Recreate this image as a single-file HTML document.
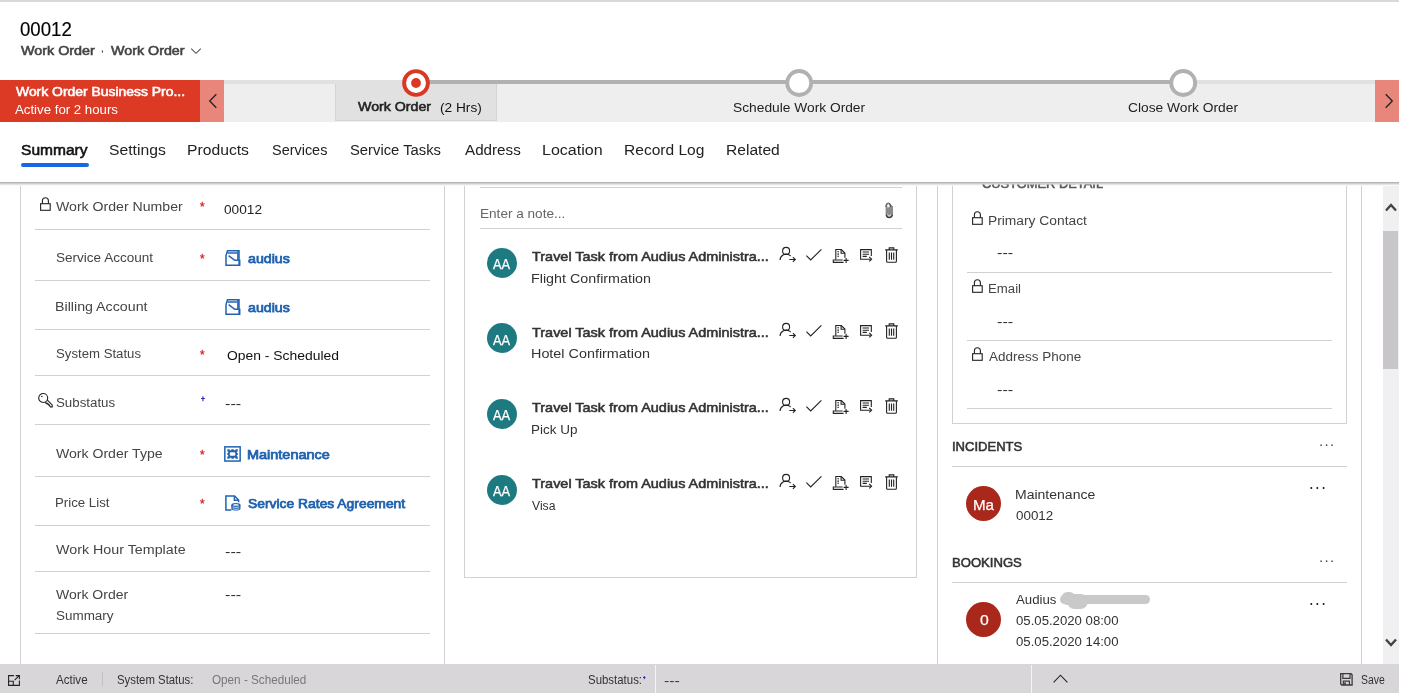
<!DOCTYPE html>
<html lang="en">
<head>
<meta charset="utf-8">
<title>Work Order 00012</title>
<style>
*{box-sizing:border-box;margin:0;padding:0}
html,body{width:1401px;height:693px;overflow:hidden;background:#fff}
body{font-family:"Liberation Sans",sans-serif;color:#333;position:relative;font-size:14px}
.b{position:absolute}
.t{position:absolute;white-space:nowrap;line-height:20px;height:20px;transform-origin:0 50%}
.hl{position:absolute;height:1px;background:#d2d0d3}
.vl{position:absolute;width:1px;background:#d2d0d3}
.req{position:absolute;color:#e0201c;font-size:15px;line-height:16px;height:16px;font-weight:bold}
.av{position:absolute;border-radius:50%}
svg{position:absolute;overflow:visible}
.ic{fill:none;stroke:#222;stroke-width:1.1}
.bl{fill:none;stroke:#2163b1;stroke-width:1.5}
</style>
</head>
<body>
<!-- top strip -->
<div class="b" style="left:0;top:0;width:1399px;height:2px;background:#d9d9d9"></div>

<!-- header chevron -->
<svg style="left:190px;top:47px" width="12" height="8" viewBox="0 0 12 8"><path d="M1.2 1.6 L6 6.3 L10.8 1.6" fill="none" stroke="#555" stroke-width="1.1"/></svg>

<!-- BPF bar -->
<div class="b" style="left:0;top:80px;width:1399px;height:42px;background:#eeeeee"></div>
<div class="b" style="left:224px;top:80px;width:1151px;height:4px;background:#e1e1e1"></div>
<div class="b" style="left:335px;top:84px;width:162px;height:37px;background:#e1e1e1;border:1px solid #d4d4d4;border-top:none"></div>
<div class="b" style="left:416px;top:80px;width:767px;height:4px;background:#b1b1b1"></div>
<div class="b" style="left:0;top:80px;width:200px;height:42px;background:#dc3a25"></div>
<div class="b" style="left:200px;top:80px;width:24px;height:42px;background:#e9867b"></div>
<div class="b" style="left:1375px;top:80px;width:24px;height:42px;background:#e9867b"></div>
<svg style="left:208px;top:93px" width="10" height="16" viewBox="0 0 10 16"><path d="M8.3 1.2 L1.7 8 L8.3 14.8" fill="none" stroke="#222" stroke-width="1.3"/></svg>
<svg style="left:1384px;top:93px" width="10" height="16" viewBox="0 0 10 16"><path d="M1.7 1.2 L8.3 8 L1.7 14.8" fill="none" stroke="#222" stroke-width="1.3"/></svg>
<!-- stage circles -->
<svg style="left:400px;top:67px" width="32" height="32" viewBox="0 0 32 32"><circle cx="16" cy="16" r="11.9" fill="#fff" stroke="#da3824" stroke-width="3.9"/><circle cx="16" cy="16" r="4.9" fill="#da3824"/></svg>
<svg style="left:783px;top:67px" width="32" height="32" viewBox="0 0 32 32"><circle cx="16.2" cy="16" r="12" fill="#fff" stroke="#b1b1b1" stroke-width="3.8"/></svg>
<svg style="left:1167px;top:67px" width="32" height="32" viewBox="0 0 32 32"><circle cx="16.2" cy="16" r="12" fill="#fff" stroke="#b1b1b1" stroke-width="3.8"/></svg>

<!-- tabs underline + shadow -->
<div class="b" style="left:21px;top:163px;width:68px;height:3.5px;border-radius:2px;background:#1a66e8"></div>
<div class="b" style="left:0;top:181px;width:1399px;height:5px;background:linear-gradient(#fff 0%,#fff 13%,#a4a4a4 15%,#c2c2c2 40%,#e4e4e4 70%,#fff 96%)"></div>

<!-- panel borders -->
<div class="vl" style="left:20px;top:186px;height:478px"></div>
<div class="vl" style="left:444px;top:186px;height:478px"></div>
<div class="vl" style="left:464px;top:186px;height:391px"></div>
<div class="vl" style="left:916px;top:186px;height:391px"></div>
<div class="hl" style="left:464px;top:577px;width:453px"></div>
<div class="vl" style="left:937px;top:186px;height:478px"></div>
<div class="vl" style="left:1361px;top:186px;height:478px"></div>
<div class="vl" style="left:952px;top:186px;height:237px"></div>
<div class="vl" style="left:1346px;top:186px;height:237px"></div>
<div class="hl" style="left:952px;top:423px;width:395px"></div>

<!-- left panel separators -->
<div class="hl" style="left:35px;top:229px;width:395px"></div>
<div class="hl" style="left:35px;top:280px;width:395px"></div>
<div class="hl" style="left:35px;top:329px;width:395px"></div>
<div class="hl" style="left:35px;top:375px;width:395px"></div>
<div class="hl" style="left:35px;top:424px;width:395px"></div>
<div class="hl" style="left:35px;top:476px;width:395px"></div>
<div class="hl" style="left:35px;top:525px;width:395px"></div>
<div class="hl" style="left:35px;top:571px;width:395px"></div>
<div class="hl" style="left:35px;top:633px;width:395px"></div>

<!-- middle separators -->
<div class="hl" style="left:480px;top:187px;width:422px"></div>
<div class="hl" style="left:480px;top:228px;width:422px"></div>

<!-- right separators -->
<div class="hl" style="left:967px;top:272px;width:365px"></div>
<div class="hl" style="left:967px;top:340px;width:365px"></div>
<div class="hl" style="left:967px;top:408px;width:365px"></div>
<div class="hl" style="left:952px;top:466px;width:395px"></div>
<div class="hl" style="left:952px;top:582px;width:395px"></div>

<!-- scrollbar -->
<div class="b" style="left:1383px;top:186px;width:16px;height:478px;background:#f0eff1"></div>
<div class="b" style="left:1383px;top:231px;width:15px;height:138px;background:#c8c6c9"></div>
<svg style="left:1385px;top:202px" width="12" height="11" viewBox="0 0 12 11"><path d="M1 8.5 L6 3 L11 8.5" fill="none" stroke="#444" stroke-width="2.4"/></svg>
<svg style="left:1385px;top:637px" width="12" height="11" viewBox="0 0 12 11"><path d="M1 2.5 L6 8 L11 2.5" fill="none" stroke="#444" stroke-width="2.4"/></svg>

<!-- footer -->
<div class="b" style="left:0;top:664px;width:1399px;height:29px;background:#d8d6d9"></div>
<div class="b" style="left:102px;top:672px;width:1px;height:14px;background:#c2c0c3"></div>
<div class="b" style="left:655px;top:665px;width:1px;height:28px;background:#f4f4f4"></div>
<div class="b" style="left:1031px;top:665px;width:1px;height:28px;background:#f4f4f4"></div>

<svg style="left:40.1px;top:196.9px" width="11" height="14" viewBox="0 0 11 14"><rect x="0.6" y="6.7" width="9.6" height="6.6" class="ic" stroke-width="1.25"/><path d="M2.4 6.7 V3.8 A3 3 0 0 1 8.4 3.8 V6.7" class="ic" stroke-width="1.15"/></svg>
<svg style="left:972.1px;top:211.1px" width="11" height="14" viewBox="0 0 11 14"><rect x="0.6" y="6.7" width="9.6" height="6.6" class="ic" stroke-width="1.25"/><path d="M2.4 6.7 V3.8 A3 3 0 0 1 8.4 3.8 V6.7" class="ic" stroke-width="1.15"/></svg>
<svg style="left:972.1px;top:278.6px" width="11" height="14" viewBox="0 0 11 14"><rect x="0.6" y="6.7" width="9.6" height="6.6" class="ic" stroke-width="1.25"/><path d="M2.4 6.7 V3.8 A3 3 0 0 1 8.4 3.8 V6.7" class="ic" stroke-width="1.15"/></svg>
<svg style="left:972.1px;top:346.8px" width="11" height="14" viewBox="0 0 11 14"><rect x="0.6" y="6.7" width="9.6" height="6.6" class="ic" stroke-width="1.25"/><path d="M2.4 6.7 V3.8 A3 3 0 0 1 8.4 3.8 V6.7" class="ic" stroke-width="1.15"/></svg>
<svg style="left:37.8px;top:392.7px" width="15" height="15" viewBox="0 0 15 15"><circle cx="5.2" cy="5" r="4.5" class="ic" stroke-width="1.05"/><circle cx="3.9" cy="3.6" r="0.75" fill="#222"/><path d="M8.9 6.6 L14.2 11.9 V13.9 H11.9" class="ic" stroke-width="1.05"/><path d="M7.0 9.0 L8.6 10.6 L9.1 10.1 L10.2 11.6 L10.7 11.1 L12.2 13.6" class="ic" stroke-width="1.5"/></svg>
<svg style="left:225px;top:249.9px" width="16" height="17" viewBox="0 0 16 17"><path d="M1 15.3 V5.5 L2.5 0.75 H14 V10.3 H14.7 V15.3 Z" class="bl" stroke-width="1.6"/><path d="M2.4 3 H12" class="bl" stroke-width="1.4"/><path d="M12.9 0.7 V10.2" class="bl" stroke-width="3.2"/><path d="M14.1 10 V15.3" class="bl" stroke-width="2.4"/><path d="M3.6 5.6 L9.8 10.3 H13" class="bl" stroke-width="1.6"/></svg>
<svg style="left:225px;top:298.8px" width="16" height="17" viewBox="0 0 16 17"><path d="M1 15.3 V5.5 L2.5 0.75 H14 V10.3 H14.7 V15.3 Z" class="bl" stroke-width="1.6"/><path d="M2.4 3 H12" class="bl" stroke-width="1.4"/><path d="M12.9 0.7 V10.2" class="bl" stroke-width="3.2"/><path d="M14.1 10 V15.3" class="bl" stroke-width="2.4"/><path d="M3.6 5.6 L9.8 10.3 H13" class="bl" stroke-width="1.6"/></svg>
<svg style="left:224.2px;top:446px" width="17" height="16" viewBox="0 0 17 16"><rect x="0.85" y="0.85" width="15.3" height="14.2" class="bl" stroke-width="1.7"/><path fill="#2163b1" fill-rule="evenodd" d="M3.3 3.2 H5.6 V4.2 H7.3 V3.2 H9.8 V4.2 H11.5 V3.2 H13.8 V5.4 H12.9 V6.9 H13.8 V9 H12.9 V10.5 H13.8 V12.7 H11.5 V11.7 H9.8 V12.7 H7.3 V11.7 H5.6 V12.7 H3.3 V10.5 H4.2 V9 H3.3 V6.9 H4.2 V5.4 H3.3 Z M6.6 6.2 L5.8 7 V8.9 L6.6 9.7 H10.5 L11.3 8.9 V7 L10.5 6.2 Z"/></svg>
<svg style="left:225.1px;top:495px" width="16" height="16" viewBox="0 0 16 16"><path d="M6.4 15 H0.9 V0.9 H9.6 L13.6 5 V7.2" class="bl" stroke-width="1.7"/><path d="M9.4 1.2 V5.2 H13.4" class="bl" stroke-width="1.5"/><ellipse cx="10.9" cy="10" rx="4.6" ry="2" fill="#2163b1"/><path d="M6.3 10 V13.6 A4.6 2 0 0 0 15.5 13.6 V10 Z" fill="#2163b1"/><path d="M7.6 11.9 Q10.9 13 14.2 11.9 M7.6 13.8 Q10.9 14.9 14.2 13.8" fill="none" stroke="#e8f0fa" stroke-width="0.8"/><ellipse cx="10.9" cy="9.9" rx="2.9" ry="0.9" fill="#dce8f6"/></svg>
<svg style="left:884.8px;top:201.6px" width="9" height="17" viewBox="0 0 9 17"><path d="M0.6 4.2 A3 3.4 0 0 1 6 3 L8 4.2 V12 A3.7 3.9 0 0 1 0.6 12 Z" fill="#8a8a8a"/><path d="M0.9 5 V3.9 A2.4 2.9 0 0 1 5.7 3.9 V5" fill="none" stroke="#444" stroke-width="0.9"/><path d="M2.2 5.2 V3.8 A1.1 1.5 0 0 1 4.4 3.8 V5.2 Z" fill="#fff"/><path d="M1.3 12.6 A3 3 0 0 0 7.3 12.6" fill="none" stroke="#3a3a3a" stroke-width="1.2"/><path d="M2.7 12.4 A1.6 1.6 0 0 0 5.9 12.4" fill="none" stroke="#f4f4f4" stroke-width="0.9"/></svg>
<svg style="left:779px;top:247.0px" width="120" height="17" viewBox="0 0 120 17"><circle cx="7.1" cy="3.9" r="3.5" class="ic"/><path d="M1 13 A6.3 6.3 0 0 1 10.6 8.1 L11.6 9" class="ic"/><path d="M10.3 12.5 H16.2 M13.9 10.2 L16.3 12.5 L13.9 14.8" class="ic"/><path d="M27.4 8.6 L31.7 12.9 L42.4 2.4" class="ic"/><path d="M56.8 12.8 V2.5 H62.3 L65.9 6 V10.8" class="ic"/><path d="M62.1 2.7 V6.2 H65.7" class="ic" stroke-width="0.9"/><path d="M58.4 4.8 H60 M58.4 7.1 H60 M58.4 9.3 H60" class="ic" stroke-width="0.9"/><path d="M64.6 15.4 H54.3 V13 H63.6" class="ic"/><path d="M64.6 13.4 H69.6 M67.1 10.9 V15.9" class="ic"/><path d="M92.3 9 V2.6 H81.6 V12.2 H91.6" class="ic"/><path d="M83.6 5 H90 M83.6 7.2 H90 M83.6 9.4 H87.8" class="ic" stroke-width="0.9"/><path d="M90.3 10 L92.6 12.2 L90.3 14.4" class="ic"/><path d="M106.2 2.9 H118.8 M110.2 2.7 V0.9 H114.8 V2.7" class="ic" stroke-width="1.15"/><path d="M107.6 3 V14.3 A1 1 0 0 0 108.6 15.3 H116.4 A1 1 0 0 0 117.4 14.3 V3" class="ic" stroke-width="1.15"/><path d="M110.3 5.4 V12.8 M112.5 5.4 V12.8 M114.7 5.4 V12.8" class="ic" stroke-width="1"/></svg>
<svg style="left:779px;top:322.6px" width="120" height="17" viewBox="0 0 120 17"><circle cx="7.1" cy="3.9" r="3.5" class="ic"/><path d="M1 13 A6.3 6.3 0 0 1 10.6 8.1 L11.6 9" class="ic"/><path d="M10.3 12.5 H16.2 M13.9 10.2 L16.3 12.5 L13.9 14.8" class="ic"/><path d="M27.4 8.6 L31.7 12.9 L42.4 2.4" class="ic"/><path d="M56.8 12.8 V2.5 H62.3 L65.9 6 V10.8" class="ic"/><path d="M62.1 2.7 V6.2 H65.7" class="ic" stroke-width="0.9"/><path d="M58.4 4.8 H60 M58.4 7.1 H60 M58.4 9.3 H60" class="ic" stroke-width="0.9"/><path d="M64.6 15.4 H54.3 V13 H63.6" class="ic"/><path d="M64.6 13.4 H69.6 M67.1 10.9 V15.9" class="ic"/><path d="M92.3 9 V2.6 H81.6 V12.2 H91.6" class="ic"/><path d="M83.6 5 H90 M83.6 7.2 H90 M83.6 9.4 H87.8" class="ic" stroke-width="0.9"/><path d="M90.3 10 L92.6 12.2 L90.3 14.4" class="ic"/><path d="M106.2 2.9 H118.8 M110.2 2.7 V0.9 H114.8 V2.7" class="ic" stroke-width="1.15"/><path d="M107.6 3 V14.3 A1 1 0 0 0 108.6 15.3 H116.4 A1 1 0 0 0 117.4 14.3 V3" class="ic" stroke-width="1.15"/><path d="M110.3 5.4 V12.8 M112.5 5.4 V12.8 M114.7 5.4 V12.8" class="ic" stroke-width="1"/></svg>
<svg style="left:779px;top:398.3px" width="120" height="17" viewBox="0 0 120 17"><circle cx="7.1" cy="3.9" r="3.5" class="ic"/><path d="M1 13 A6.3 6.3 0 0 1 10.6 8.1 L11.6 9" class="ic"/><path d="M10.3 12.5 H16.2 M13.9 10.2 L16.3 12.5 L13.9 14.8" class="ic"/><path d="M27.4 8.6 L31.7 12.9 L42.4 2.4" class="ic"/><path d="M56.8 12.8 V2.5 H62.3 L65.9 6 V10.8" class="ic"/><path d="M62.1 2.7 V6.2 H65.7" class="ic" stroke-width="0.9"/><path d="M58.4 4.8 H60 M58.4 7.1 H60 M58.4 9.3 H60" class="ic" stroke-width="0.9"/><path d="M64.6 15.4 H54.3 V13 H63.6" class="ic"/><path d="M64.6 13.4 H69.6 M67.1 10.9 V15.9" class="ic"/><path d="M92.3 9 V2.6 H81.6 V12.2 H91.6" class="ic"/><path d="M83.6 5 H90 M83.6 7.2 H90 M83.6 9.4 H87.8" class="ic" stroke-width="0.9"/><path d="M90.3 10 L92.6 12.2 L90.3 14.4" class="ic"/><path d="M106.2 2.9 H118.8 M110.2 2.7 V0.9 H114.8 V2.7" class="ic" stroke-width="1.15"/><path d="M107.6 3 V14.3 A1 1 0 0 0 108.6 15.3 H116.4 A1 1 0 0 0 117.4 14.3 V3" class="ic" stroke-width="1.15"/><path d="M110.3 5.4 V12.8 M112.5 5.4 V12.8 M114.7 5.4 V12.8" class="ic" stroke-width="1"/></svg>
<svg style="left:779px;top:474.3px" width="120" height="17" viewBox="0 0 120 17"><circle cx="7.1" cy="3.9" r="3.5" class="ic"/><path d="M1 13 A6.3 6.3 0 0 1 10.6 8.1 L11.6 9" class="ic"/><path d="M10.3 12.5 H16.2 M13.9 10.2 L16.3 12.5 L13.9 14.8" class="ic"/><path d="M27.4 8.6 L31.7 12.9 L42.4 2.4" class="ic"/><path d="M56.8 12.8 V2.5 H62.3 L65.9 6 V10.8" class="ic"/><path d="M62.1 2.7 V6.2 H65.7" class="ic" stroke-width="0.9"/><path d="M58.4 4.8 H60 M58.4 7.1 H60 M58.4 9.3 H60" class="ic" stroke-width="0.9"/><path d="M64.6 15.4 H54.3 V13 H63.6" class="ic"/><path d="M64.6 13.4 H69.6 M67.1 10.9 V15.9" class="ic"/><path d="M92.3 9 V2.6 H81.6 V12.2 H91.6" class="ic"/><path d="M83.6 5 H90 M83.6 7.2 H90 M83.6 9.4 H87.8" class="ic" stroke-width="0.9"/><path d="M90.3 10 L92.6 12.2 L90.3 14.4" class="ic"/><path d="M106.2 2.9 H118.8 M110.2 2.7 V0.9 H114.8 V2.7" class="ic" stroke-width="1.15"/><path d="M107.6 3 V14.3 A1 1 0 0 0 108.6 15.3 H116.4 A1 1 0 0 0 117.4 14.3 V3" class="ic" stroke-width="1.15"/><path d="M110.3 5.4 V12.8 M112.5 5.4 V12.8 M114.7 5.4 V12.8" class="ic" stroke-width="1"/></svg>
<div class="av" style="left:486.95px;top:247.70px;width:30.2px;height:30.2px;background:#1d7a80"></div>
<div class="av" style="left:486.95px;top:323.30px;width:30.2px;height:30.2px;background:#1d7a80"></div>
<div class="av" style="left:486.95px;top:399.00px;width:30.2px;height:30.2px;background:#1d7a80"></div>
<div class="av" style="left:486.95px;top:475.00px;width:30.2px;height:30.2px;background:#1d7a80"></div>
<div class="av" style="left:966.25px;top:485.75px;width:35px;height:35px;background:#a9271b"></div>
<div class="av" style="left:966.25px;top:602.00px;width:35px;height:35px;background:#a9271b"></div>
<div class="b" style="left:1060px;top:595.3px;width:90px;height:8.6px;border-radius:4.5px;background:#c9c9c9;filter:blur(0.5px)"></div>
<div class="b" style="left:1061px;top:591.5px;width:15px;height:13.5px;border-radius:7px;background:#c9c9c9;filter:blur(0.5px)"></div>
<div class="b" style="left:1067px;top:594px;width:21px;height:14.5px;border-radius:7.5px;background:#c9c9c9;filter:blur(0.5px)"></div>
<svg style="left:8px;top:675px" width="12" height="11" viewBox="0 0 12 11"><path d="M6 0.6 H0.6 V10.4 H11.4 V5.4" class="ic" stroke-width="1.2"/><path d="M0.6 6.2 H5.3 V10.4" class="ic" stroke-width="1.2"/><path d="M6.6 5.2 L11.2 0.7 M7.7 0.6 H11.4 V4.3" class="ic" stroke-width="1.2"/></svg>
<svg style="left:1340.3px;top:672.7px" width="13" height="13" viewBox="0 0 13 13"><path d="M0.7 0.7 H11 L12.1 1.8 V12 H1.8 L0.7 10.9 Z" fill="none" stroke="#3a3a3a" stroke-width="1.3"/><path d="M2.9 0.9 V5.4 H10 V0.9" fill="none" stroke="#3a3a3a" stroke-width="1.2"/><path d="M3.3 12 V8.2 H9.4 V12" fill="none" stroke="#3a3a3a" stroke-width="1.2"/><rect x="4.2" y="9.4" width="1.7" height="2.3" fill="#3a3a3a"/></svg>
<svg style="left:1052.5px;top:674px" width="15" height="9" viewBox="0 0 15 9"><path d="M0.6 8.4 L7.5 1.2 L14.4 8.4" class="ic" stroke-width="1.2"/></svg>

<div class="t" style="left:20.10px;top:19.00px;font-size:19.5px;color:#000;transform:scaleX(0.9552);-webkit-text-stroke:0.15px #000">00012</div>
<div class="t" style="left:20.62px;top:41.00px;font-size:12.29px;color:#444;transform:scaleX(1.1678);-webkit-text-stroke:0.55px #444">Work Order</div>
<div class="t" style="left:101.09px;top:41.00px;font-size:12.29px;color:#444;transform:scaleX(0.7048);-webkit-text-stroke:0.55px #444">·</div>
<div class="t" style="left:111.02px;top:41.00px;font-size:12.29px;color:#444;transform:scaleX(1.1631);-webkit-text-stroke:0.55px #444">Work Order</div>
<div class="t" style="left:15.51px;top:82.00px;font-size:12.29px;color:#fff;transform:scaleX(1.1326);-webkit-text-stroke:0.55px #fff">Work Order Business Pro...</div>
<div class="t" style="left:15.20px;top:100.00px;font-size:12.7px;color:#fff;transform:scaleX(1.0428)">Active for 2 hours</div>
<div class="t" style="left:357.80px;top:97.00px;font-size:12.89px;color:#222;transform:scaleX(1.1027);-webkit-text-stroke:0.55px #222">Work Order</div>
<div class="t" style="left:440.30px;top:98.00px;font-size:13.5px;color:#111;transform:scaleX(1.0134)">(2 Hrs)</div>
<div class="t" style="left:733.00px;top:98.00px;font-size:13.6px;color:#222;transform:scaleX(1.0127)">Schedule Work Order</div>
<div class="t" style="left:1128.30px;top:98.00px;font-size:13.6px;color:#222;transform:scaleX(1.0137)">Close Work Order</div>
<div class="t" style="left:21.49px;top:140.00px;font-size:14.79px;color:#111;transform:scaleX(1.0526);-webkit-text-stroke:0.55px #111">Summary</div>
<div class="t" style="left:109.00px;top:140.00px;font-size:15.5px;color:#222;transform:scaleX(1.0131)">Settings</div>
<div class="t" style="left:187.29px;top:140.00px;font-size:15.5px;color:#222;transform:scaleX(1.0129)">Products</div>
<div class="t" style="left:272.00px;top:140.00px;font-size:15.5px;color:#222;transform:scaleX(0.9315)">Services</div>
<div class="t" style="left:350.20px;top:140.00px;font-size:15.5px;color:#222;transform:scaleX(0.9540)">Service Tasks</div>
<div class="t" style="left:465.00px;top:140.00px;font-size:15.5px;color:#222;transform:scaleX(0.9803)">Address</div>
<div class="t" style="left:542.16px;top:140.00px;font-size:15.5px;color:#222;transform:scaleX(1.0353)">Location</div>
<div class="t" style="left:624.40px;top:140.00px;font-size:15.5px;color:#222;transform:scaleX(1.0036)">Record Log</div>
<div class="t" style="left:726.19px;top:140.00px;font-size:15.5px;color:#222;transform:scaleX(1.0055)">Related</div>
<div class="t" style="left:56.00px;top:197.00px;font-size:13.7px;color:#444;transform:scaleX(1.0307)">Work Order Number</div>
<div class="t" style="left:224.20px;top:200.00px;font-size:13.7px;color:#1f1f1f;transform:scaleX(0.9987)">00012</div>
<div class="t" style="left:56.30px;top:248.00px;font-size:13.7px;color:#444;transform:scaleX(0.9893)">Service Account</div>
<div class="t" style="left:248.02px;top:249.00px;font-size:12.76px;color:#1f62b0;transform:scaleX(1.1119);-webkit-text-stroke:0.75px #1f62b0">audius</div>
<div class="t" style="left:55.26px;top:297.00px;font-size:13.7px;color:#444;transform:scaleX(1.0393)">Billing Account</div>
<div class="t" style="left:248.02px;top:298.00px;font-size:12.76px;color:#1f62b0;transform:scaleX(1.1119);-webkit-text-stroke:0.75px #1f62b0">audius</div>
<div class="t" style="left:56.30px;top:344.00px;font-size:13.7px;color:#444;transform:scaleX(0.9637)">System Status</div>
<div class="t" style="left:226.60px;top:346.00px;font-size:13.7px;color:#111;transform:scaleX(1.0152)">Open - Scheduled</div>
<div class="t" style="left:56.30px;top:393.00px;font-size:13.7px;color:#444;transform:scaleX(0.9716)">Substatus</div>
<div class="t" style="left:56.00px;top:444.00px;font-size:13.7px;color:#444;transform:scaleX(1.0281)">Work Order Type</div>
<div class="t" style="left:246.89px;top:445.00px;font-size:12.76px;color:#1f62b0;transform:scaleX(1.1338);-webkit-text-stroke:0.75px #1f62b0">Maintenance</div>
<div class="t" style="left:55.33px;top:493.00px;font-size:13.7px;color:#444;transform:scaleX(0.9677)">Price List</div>
<div class="t" style="left:247.91px;top:494.00px;font-size:12.76px;color:#1f62b0;transform:scaleX(1.0872);-webkit-text-stroke:0.75px #1f62b0">Service Rates Agreement</div>
<div class="t" style="left:56.00px;top:540.00px;font-size:13.7px;color:#444;transform:scaleX(1.0434)">Work Hour Template</div>
<div class="t" style="left:56.00px;top:585.00px;font-size:13.7px;color:#444;transform:scaleX(1.0236)">Work Order</div>
<div class="t" style="left:56.30px;top:606.00px;font-size:13.7px;color:#444;transform:scaleX(0.9827)">Summary</div>
<div class="t" style="left:480.01px;top:204.00px;font-size:13.7px;color:#666;transform:scaleX(0.9919)">Enter a note...</div>
<div class="t" style="left:532.01px;top:247.00px;font-size:12.99px;color:#333;transform:scaleX(1.1126);-webkit-text-stroke:0.55px #333">Travel Task from Audius Administra...</div>
<div class="t" style="left:531.16px;top:269.00px;font-size:13.7px;color:#333;transform:scaleX(1.0445)">Flight Confirmation</div>
<div class="t" style="left:493.00px;top:254.00px;font-size:14.1px;color:#fff;transform:scaleX(0.9118);-webkit-text-stroke:0.25px #fff">AA</div>
<div class="t" style="left:532.01px;top:323.00px;font-size:12.99px;color:#333;transform:scaleX(1.1126);-webkit-text-stroke:0.55px #333">Travel Task from Audius Administra...</div>
<div class="t" style="left:531.15px;top:344.00px;font-size:13.7px;color:#333;transform:scaleX(1.0497)">Hotel Confirmation</div>
<div class="t" style="left:493.00px;top:330.00px;font-size:14.1px;color:#fff;transform:scaleX(0.9118);-webkit-text-stroke:0.25px #fff">AA</div>
<div class="t" style="left:532.01px;top:398.00px;font-size:12.99px;color:#333;transform:scaleX(1.1126);-webkit-text-stroke:0.55px #333">Travel Task from Audius Administra...</div>
<div class="t" style="left:531.22px;top:420.00px;font-size:13.7px;color:#333;transform:scaleX(0.9837)">Pick Up</div>
<div class="t" style="left:493.00px;top:405.00px;font-size:14.1px;color:#fff;transform:scaleX(0.9118);-webkit-text-stroke:0.25px #fff">AA</div>
<div class="t" style="left:532.01px;top:474.00px;font-size:12.99px;color:#333;transform:scaleX(1.1126);-webkit-text-stroke:0.55px #333">Travel Task from Audius Administra...</div>
<div class="t" style="left:532.20px;top:496.00px;font-size:13.7px;color:#333;transform:scaleX(0.8888)">Visa</div>
<div class="t" style="left:493.00px;top:481.00px;font-size:14.1px;color:#fff;transform:scaleX(0.9118);-webkit-text-stroke:0.25px #fff">AA</div>
<div class="t" style="left:982.29px;top:174.00px;font-size:12.29px;color:#5a5a5a;transform:scaleX(1.0475);clip-path:inset(10.5px 0 0 0);-webkit-text-stroke:0.55px #5a5a5a">CUSTOMER DETAIL</div>
<div class="t" style="left:987.89px;top:211.00px;font-size:13.7px;color:#444;transform:scaleX(1.0080)">Primary Contact</div>
<div class="t" style="left:988.04px;top:279.00px;font-size:13.7px;color:#444;transform:scaleX(0.9640)">Email</div>
<div class="t" style="left:989.00px;top:347.00px;font-size:13.7px;color:#444;transform:scaleX(0.9851)">Address Phone</div>
<div class="t" style="left:952.18px;top:437.00px;font-size:13.19px;color:#333;transform:scaleX(0.9883);-webkit-text-stroke:0.55px #333">INCIDENTS</div>
<div class="t" style="left:972.79px;top:495.00px;font-size:15.0px;color:#fff;transform:scaleX(1.0097);-webkit-text-stroke:0.25px #fff">Ma</div>
<div class="t" style="left:1015.38px;top:485.00px;font-size:13.7px;color:#333;transform:scaleX(1.0237)">Maintenance</div>
<div class="t" style="left:1015.90px;top:506.00px;font-size:13.7px;color:#333;transform:scaleX(0.9773)">00012</div>
<div class="t" style="left:952.18px;top:553.00px;font-size:13.19px;color:#333;transform:scaleX(0.9927);-webkit-text-stroke:0.55px #333">BOOKINGS</div>
<div class="t" style="left:979.60px;top:610.00px;font-size:15.0px;color:#fff;transform:scaleX(1.0498);-webkit-text-stroke:0.25px #fff">0</div>
<div class="t" style="left:1016.40px;top:590.00px;font-size:13.7px;color:#333;transform:scaleX(0.9663)">Audius</div>
<div class="t" style="left:1015.90px;top:611.00px;font-size:13.7px;color:#333;transform:scaleX(0.9621)">05.05.2020 08:00</div>
<div class="t" style="left:1015.90px;top:632.00px;font-size:13.7px;color:#333;transform:scaleX(0.9621)">05.05.2020 14:00</div>
<div class="t" style="left:56.30px;top:670.00px;font-size:12.5px;color:#333;transform:scaleX(0.9298)">Active</div>
<div class="t" style="left:117.00px;top:670.00px;font-size:12.5px;color:#333;transform:scaleX(0.9092)">System Status:</div>
<div class="t" style="left:211.60px;top:670.00px;font-size:12.5px;color:#777;transform:scaleX(0.9364)">Open - Scheduled</div>
<div class="t" style="left:587.90px;top:670.00px;font-size:12.5px;color:#333;transform:scaleX(0.9146)">Substatus:</div>
<div class="t" style="left:1361.00px;top:670.00px;font-size:12.5px;color:#333;transform:scaleX(0.8337)">Save</div>
<div class="t" style="left:225.00px;top:394.00px;font-size:13.7px;color:#222;transform:scaleX(1.1806)">---</div>
<div class="t" style="left:225.00px;top:542.00px;font-size:13.7px;color:#222;transform:scaleX(1.1806)">---</div>
<div class="t" style="left:225.00px;top:585.00px;font-size:13.7px;color:#222;transform:scaleX(1.1806)">---</div>
<div class="t" style="left:997.00px;top:243.00px;font-size:13.7px;color:#222;transform:scaleX(1.1806)">---</div>
<div class="t" style="left:997.00px;top:312.00px;font-size:13.7px;color:#222;transform:scaleX(1.1806)">---</div>
<div class="t" style="left:997.00px;top:380.00px;font-size:13.7px;color:#222;transform:scaleX(1.1806)">---</div>
<div class="t" style="left:663.80px;top:671.00px;font-size:12.5px;color:#333;transform:scaleX(1.2644)">---</div>
<div class="t" style="left:200.30px;top:197.00px;font-size:13.5px;color:#d61a1a;transform:scaleX(0.8649);-webkit-text-stroke:0.3px #d61a1a">*</div>
<div class="t" style="left:200.30px;top:249.00px;font-size:13.5px;color:#d61a1a;transform:scaleX(0.8649);-webkit-text-stroke:0.3px #d61a1a">*</div>
<div class="t" style="left:200.30px;top:345.00px;font-size:13.5px;color:#d61a1a;transform:scaleX(0.8649);-webkit-text-stroke:0.3px #d61a1a">*</div>
<div class="t" style="left:200.30px;top:445.00px;font-size:13.5px;color:#d61a1a;transform:scaleX(0.8649);-webkit-text-stroke:0.3px #d61a1a">*</div>
<div class="t" style="left:200.30px;top:494.00px;font-size:13.5px;color:#d61a1a;transform:scaleX(0.8649);-webkit-text-stroke:0.3px #d61a1a">*</div>
<div class="t" style="left:201.19px;top:389.00px;font-size:9.39px;color:#2323b8;transform:scaleX(0.7013);-webkit-text-stroke:0.55px #2323b8">+</div>
<div class="t" style="left:643.19px;top:667.00px;font-size:5.99px;color:#2323b8;transform:scaleX(0.7025);-webkit-text-stroke:0.55px #2323b8">+</div>
<div class="t" style="left:1318.83px;top:431.00px;font-size:15.5px;color:#444;transform:scaleX(0.9688);letter-spacing:1.4px">...</div>
<div class="t" style="left:1318.83px;top:547.00px;font-size:15.5px;color:#444;transform:scaleX(0.9688);letter-spacing:1.4px">...</div>
<div class="t" style="left:1308.86px;top:473.00px;font-size:18px;color:#222;transform:scaleX(0.9366);letter-spacing:1.5px">...</div>
<div class="t" style="left:1308.86px;top:589.00px;font-size:18px;color:#222;transform:scaleX(0.9366);letter-spacing:1.5px">...</div>
</body>
</html>
